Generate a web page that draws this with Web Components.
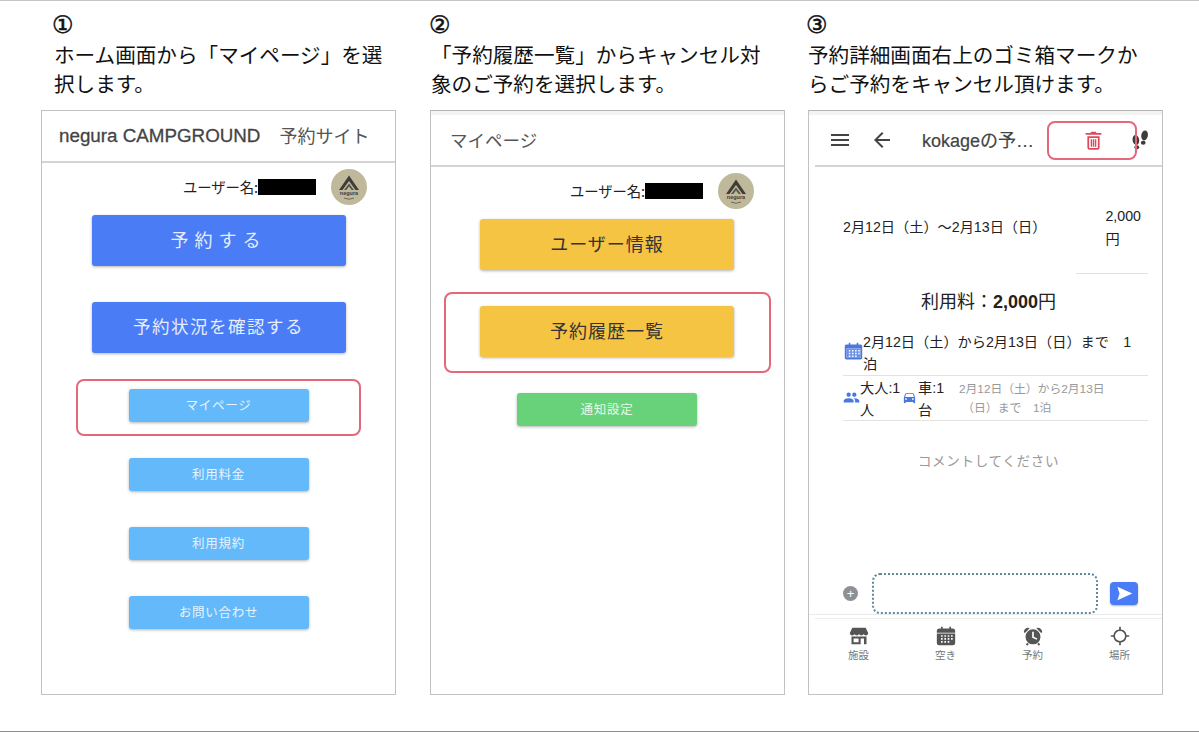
<!DOCTYPE html>
<html lang="ja">
<head>
<meta charset="utf-8">
<title>予約キャンセル手順</title>
<style>
  html, body { margin: 0; height: 100%; background: #fff; }
  body { font-family: "Liberation Sans", "Noto Sans CJK JP", sans-serif; }
</style>
</head>
<body>
<guide-page>
  <guide-step style="margin-left: 41px" inset="13">
    <span slot="num">①</span>
    ホーム画面から「マイページ」を選<br>択します。
    <phone-frame slot="phone">
      <app-bar>
        <span style="font-size: 18.8px; color: #444; margin-left: 17px; -webkit-text-stroke: .3px #444">negura CAMPGROUND</span>
        <span style="font-size: 18px; color: #555; margin-left: 19px; padding-bottom: 3px">予約サイト</span>
      </app-bar>
      <user-row pad="28"></user-row>
      <button-stack>
        <app-button kind="primary" spaced>予約する</app-button>
        <app-button kind="primary">予約状況を確認する</app-button>
        <app-button kind="light">マイページ</app-button>
        <app-button kind="light">利用料金</app-button>
        <app-button kind="light">利用規約</app-button>
        <app-button kind="light">お問い合わせ</app-button>
      </button-stack>
      <red-mark style="left: 34px; top: 268px; width: 281px; height: 53px"></red-mark>
    </phone-frame>
  </guide-step>

  <guide-step style="margin-left: 34px" inset="1">
    <span slot="num">②</span>
    「予約履歴一覧」からキャンセル対<br>象のご予約を選択します。
    <phone-frame slot="phone" strip>
      <app-bar>
        <span style="font-size: 17.5px; color: #555; margin-left: 19px; padding-bottom: 2px">マイページ</span>
      </app-bar>
      <user-row pad="30"></user-row>
      <button-stack style="padding-right: 1px">
        <app-button kind="amber">ユーザー情報</app-button>
        <app-button kind="amber">予約履歴一覧</app-button>
        <app-button kind="green">通知設定</app-button>
      </button-stack>
      <red-mark style="left: 13px; top: 181px; width: 323px; height: 77px"></red-mark>
    </phone-frame>
  </guide-step>

  <guide-step style="margin-left: 23px" inset="0">
    <span slot="num">③</span>
    予約詳細画面右上のゴミ箱マークか<br>らご予約をキャンセル頂けます。
    <phone-frame slot="phone" strip>
      <detail-bar></detail-bar>
      <booking-detail></booking-detail>
      <red-mark style="left: 238px; top: 10px; width: 86px; height: 35px"></red-mark>
    </phone-frame>
  </guide-step>
</guide-page>

<script>
const ICONS = {
  menu: '<path d="M3 18h18v-2H3v2zm0-5h18v-2H3v2zm0-7v2h18V6H3z"/>',
  back: '<path d="M20 11H7.830l5.590-5.590L12 4l-8 8 8 8 1.410-1.410L7.830 13H20v-2z"/>',
  trash: '<path d="M8.500 3.500 9.500 2h5l1 1.500H21v2H3v-2zM5 7h14v13a2.500 2.500 0 0 1-2.500 2.500h-9A2.500 2.500 0 0 1 5 20zm2 2v11a.5.5 0 0 0 .5.5h9a.5.5 0 0 0 .5-.5V9zm1.800 1.500h1.600v8.500H8.800zm2.400 0h1.600v8.500h-1.600zm2.400 0h1.600v8.500h-1.600z"/>',
  steps: '<ellipse cx="7.500" cy="12" rx="3.600" ry="5.500" transform="rotate(-8 7.500 12)"/><ellipse cx="8.500" cy="20" rx="2.600" ry="2.300"/><ellipse cx="17" cy="7" rx="3.600" ry="5.500" transform="rotate(10 17 7)"/><ellipse cx="15.500" cy="15" rx="2.600" ry="2.300"/>',
  event: '<path fill-rule="evenodd" d="M6 1h2v2h8V1h2v2h3a2 2 0 0 1 2 2v15a2 2 0 0 1-2 2H3a2 2 0 0 1-2-2V5a2 2 0 0 1 2-2h3zM3 8v12h18V8z"/><path d="M3 8h18v12H3z" opacity=".82"/><g fill="#fff"><path d="M6 10h2v2H6zm4 0h2v2h-2zm4 0h2v2h-2zm4 0h2v2h-2zM6 13.500h2v2H6zm4 0h2v2h-2zm4 0h2v2h-2zm4 0h2v2h-2zM6 17h2v2H6zm4 0h2v2h-2zm4 0h2v2h-2z"/></g>',
  people: '<path d="M16 11c1.660 0 2.990-1.340 2.990-3S17.660 5 16 5c-1.660 0-3 1.340-3 3s1.340 3 3 3zm-8 0c1.660 0 2.990-1.340 2.990-3S9.660 5 8 5C6.340 5 5 6.340 5 8s1.340 3 3 3zm0 2c-2.330 0-7 1.170-7 3.500V19h14v-2.500c0-2.330-4.670-3.500-7-3.500zm8 0c-.29 0-.62.02-.97.05 1.160.84 1.970 1.970 1.970 3.450V19h6v-2.500c0-2.330-4.670-3.500-7-3.500z"/>',
  car: '<path d="M18.920 6.010C18.720 5.420 18.160 5 17.500 5h-11c-.66 0-1.210.42-1.420 1.010L3 12v8c0 .55.45 1 1 1h1c.55 0 1-.45 1-1v-1h12v1c0 .55.45 1 1 1h1c.55 0 1-.45 1-1v-8l-2.080-5.990zM6.500 16c-.83 0-1.500-.67-1.500-1.500S5.670 13 6.500 13s1.500.67 1.500 1.500S7.330 16 6.500 16zm11 0c-.83 0-1.500-.67-1.500-1.500s.67-1.500 1.500-1.500 1.500.67 1.500 1.500-.67 1.500-1.500 1.500zM5 11l1.500-4.500h11L19 11H5z"/>',
  send: '<path d="M2 21.500 23 12 2 2.500 5 12z"/>',
  store: '<path d="M4 2h16l3 6.500c0 1.700-1.300 2.800-2.800 2.800-1.100 0-2-.5-2.700-1.300-.7.8-1.500 1.300-2.700 1.300-1.100 0-2-.5-2.800-1.300-.7.8-1.600 1.300-2.700 1.300-1.100 0-2-.5-2.600-1.300-.7.8-1.600 1.300-2.700 1.300C2.300 11.300 1 10.200 1 8.500z"/><path fill-rule="evenodd" d="M3 12.500h18V22H3zM5.500 15v4.500h6V15zm8.500 0v7h4v-7z"/>',
  calendar: '<path fill-rule="evenodd" d="M6 1h2v2h8V1h2v2h2a3 3 0 0 1 3 3v14a3 3 0 0 1-3 3H4a3 3 0 0 1-3-3V6a3 3 0 0 1 3-3h2zM1 8h22v1H1z"/><g fill="#fff"><path d="M6 11h2v2H6zm4 0h2v2h-2zm4 0h2v2h-2zm4 0h2v2h-2zM6 14.500h2v2H6zm4 0h2v2h-2zm4 0h2v2h-2zm4 0h2v2h-2zM6 18h2v2H6zm4 0h2v2h-2zm4 0h2v2h-2z"/></g>',
  alarm: '<path fill-rule="evenodd" d="M12 4a9 9 0 1 1 0 18 9 9 0 0 1 0-18zm-1 3v7l5.500 2.500.7-1.500-4.200-2V7z"/><path d="M1 7c0-3 2.500-5 5-5 1 0 1.500.3 2 .7L2.300 8.500C1.500 8.200 1 7.800 1 7zm22 0c0-3-2.500-5-5-5-1 0-1.500.3-2 .7l5.700 5.800c.8-.3 1.300-.7 1.300-1.500zM5 20l2 1.500-2 2.200-1.500-1.500zm14 0-2 1.500 2 2.200 1.500-1.500z"/>',
  gps: '<path fill-rule="evenodd" d="M11 1h2v3.100A8 8 0 0 1 19.900 11H23v2h-3.100a8 8 0 0 1-6.900 6.900V23h-2v-3.100A8 8 0 0 1 4.100 13H1v-2h3.100A8 8 0 0 1 11 4.100zm1 5a6 6 0 1 0 0 12 6 6 0 0 0 0-12z"/>'
}

customElements.define('ui-icon', class extends HTMLElement {
  constructor () {
    super()
    let shadow = this.attachShadow({mode: 'open'})
    shadow.innerHTML = `
<svg viewBox="0 0 24 24" fill="currentColor">${ICONS[this.getAttribute('name')]}</svg>
<style>
  :host { display: inline-block; flex: none; width: var(--size, 24px); height: var(--size, 24px); color: var(--tint, #555); }
  svg { display: block; width: 100%; height: 100%; }
</style>`
  }
})

customElements.define('guide-page', class extends HTMLElement {
  constructor () {
    super()
    this.attachShadow({mode: 'open'}).innerHTML = `
<slot></slot>
<style>
  :host {
    display: flex;
    box-sizing: border-box;
    height: 732px;
    overflow: hidden;
    border-top: 1px solid #c4c4c4;
    border-bottom: 1px solid #8a8a8a;
  }
</style>`
  }
})

customElements.define('guide-step', class extends HTMLElement {
  constructor () {
    super()
    let shadow = this.attachShadow({mode: 'open'})
    shadow.innerHTML = `
<div class="cap">
  <div class="num"><slot name="num"></slot></div>
  <slot></slot>
</div>
<slot name="phone"></slot>
<style>
  :host { display: flex; flex-direction: column; width: 355px; flex: none; }
  .cap {
    box-sizing: border-box;
    height: 109px;
    padding: 13px 0 0 ${this.getAttribute('inset') || 0}px;
    font: 20.6px/29px "Noto Sans CJK JP", sans-serif;
    color: #111;
    white-space: nowrap;
  }
  .num {
    margin-left: -2px;
    height: 26px;
    font: 24px/23px "DejaVu Sans", sans-serif;
    -webkit-text-stroke: .5px #111;
  }
</style>`
  }
})

customElements.define('phone-frame', class extends HTMLElement {
  constructor () {
    super()
    this.attachShadow({mode: 'open'}).innerHTML = `
<slot></slot>
<style>
  :host {
    display: flex;
    flex-direction: column;
    position: relative;
    box-sizing: border-box;
    height: 585px;
    border: 1px solid #c2c2c2;
    background: #fff;
  }
  :host([strip]) { padding-top: 4px; border-top-color: #b4b4b4; }
</style>`
    if (this.hasAttribute('strip')) this.style.backgroundImage = 'linear-gradient(#f3f3f3 4px, #fff 4px)'
  }
})

customElements.define('app-bar', class extends HTMLElement {
  constructor () {
    super()
    this.attachShadow({mode: 'open'}).innerHTML = `
<slot></slot>
<style>
  :host {
    display: flex;
    align-items: center;
    flex: none;
    height: 50px;
    background: #fff;
    font-family: "Liberation Sans", "Noto Sans CJK JP", sans-serif;
    border-bottom: 2px solid #d4d4d4;
    white-space: nowrap;
  }
</style>`
  }
})

customElements.define('detail-bar', class extends HTMLElement {
  constructor () {
    super()
    this.attachShadow({mode: 'open'}).innerHTML = `
<ui-icon name="menu" style="--size: 24px; --tint: #444; margin-left: 13px"></ui-icon>
<ui-icon name="back" style="--size: 24px; --tint: #444; margin-left: 18px"></ui-icon>
<span class="title">kokageの予…</span>
<ui-icon name="trash" style="--size: 21px; --tint: #dd4a5c; margin-left: 47px"></ui-icon>
<ui-icon name="steps" style="--size: 22px; --tint: #3c3c3c; margin-left: 25px"></ui-icon>
<style>
  :host {
    display: flex;
    align-items: center;
    flex: none;
    height: 50px;
    margin-left: 6px;
    border-bottom: 2px solid #d4d4d4;
    white-space: nowrap;
  }
  .title {
    margin-left: 28px;
    padding-bottom: 2px;
    font: 18px "Liberation Sans", "Noto Sans CJK JP", sans-serif;
    color: #444;
    width: 114px;
    -webkit-text-stroke: .2px #444;
  }
</style>`
  }
})

customElements.define('user-row', class extends HTMLElement {
  constructor () {
    super()
    this.attachShadow({mode: 'open'}).innerHTML = `
<span class="name">ユーザー名:</span><span class="hidden"></span>
<svg class="logo" viewBox="0 0 36 36">
  <circle cx="18" cy="18" r="18" fill="#bfb89b"/>
  <path d="M18 6.500 28 21h-3.500L18 12 11.500 21H8z" fill="#3f3d38"/>
  <path d="M18 14.500 23 21h-2.400L18 17.500 15.400 21H13z" fill="#59564c"/>
  <text x="18" y="26" text-anchor="middle" font-size="5.500" font-family="Liberation Sans, sans-serif" font-weight="700" fill="#3f3d38">negura</text>
  <path d="M13 29q5 2.500 10 0" stroke="#57544a" stroke-width=".8" fill="none"/>
</svg>
<style>
  :host {
    display: flex;
    align-items: center;
    justify-content: flex-end;
    flex: none;
    padding: 6px ${this.getAttribute('pad')}px 0 0;
    font: 14.400px "Noto Sans CJK JP", sans-serif;
    color: #222;
  }
  .name { white-space: nowrap; letter-spacing: -.1px; padding-bottom: 2px; }
  .hidden { width: 58px; height: 16px; background: #000; margin-right: 15px; }
  .logo { width: 36px; height: 36px; flex: none; }
</style>`
  }
})

customElements.define('button-stack', class extends HTMLElement {
  constructor () {
    super()
    this.attachShadow({mode: 'open'}).innerHTML = `
<slot></slot>
<style>
  :host { display: flex; flex-direction: column; align-items: center; gap: 36px; padding-top: 10px; }
</style>`
  }
})

customElements.define('app-button', class extends HTMLElement {
  constructor () {
    super()
    this.attachShadow({mode: 'open'}).innerHTML = `
<slot></slot>
<style>
  :host {
    display: flex;
    align-items: center;
    justify-content: center;
    box-sizing: border-box;
    border-radius: 3px;
    white-space: nowrap;
    font-family: "Noto Sans CJK JP", sans-serif;
    box-shadow: 0 1px 3px rgba(0,0,0,.3);
  }
  :host([kind=primary]) { width: 254px; height: 51px; padding-bottom: 4px; background: #4a7cf6; color: #e6edfd; font-size: 17.500px; letter-spacing: 1.500px; }
  :host([kind=primary][spaced]) { font-size: 18px; letter-spacing: 6px; }
  :host([kind=amber]) { width: 254px; height: 51px; padding-bottom: 4px; background: #f5c442; color: #333; font-size: 18px; letter-spacing: 1px; }
  :host([kind=light]) { width: 180px; height: 33px; padding-bottom: 3px; background: #64b9fa; color: #e8f4fe; font-size: 12.500px; letter-spacing: .7px; }
  :host([kind=green]) { width: 180px; height: 33px; padding-bottom: 2px; background: #68d27a; color: #e6f7e9; font-size: 12.500px; letter-spacing: .7px; }
</style>`
  }
})

customElements.define('red-mark', class extends HTMLElement {
  constructor () {
    super()
    this.attachShadow({mode: 'open'}).innerHTML = `
<style>
  :host {
    display: block;
    position: absolute;
    border: 2px solid #e4687a;
    border-radius: 8px;
    pointer-events: none;
  }
</style>`
  }
})

customElements.define('booking-detail', class extends HTMLElement {
  constructor () {
    super()
    this.attachShadow({mode: 'open'}).innerHTML = `
<div class="head">
  <span>2月12日（土）〜2月13日（日）</span>
  <span class="price">2,000<br>円</span>
</div>
<div class="short"></div>
<div class="fee">利用料：<b>2,000</b>円</div>
<div class="row one">
  <ui-icon name="event" style="--size: 19px; --tint: #4a78e0; margin-top: 11px"></ui-icon>
  <span>2月12日（土）から2月13日（日）まで　1<br>泊</span>
</div>
<div class="row two">
  <ui-icon name="people" style="--size: 17px; --tint: #4a78e0; margin-top: 12px"></ui-icon>
  <span class="adult">大人:1<br>人</span>
  <ui-icon name="car" style="--size: 15px; --tint: #4a78e0; margin-top: 13px"></ui-icon>
  <span class="cars">車:1<br>台</span>
  <span class="note">2月12日（土）から2月13日<br>&nbsp;（日）まで　1泊</span>
</div>
<div class="hint">コメントしてください</div>
<div class="grow"></div>
<div class="input">
  <span class="plus">+</span>
  <span class="box"></span>
  <span class="send"><ui-icon name="send" style="--size: 17px; --tint: #fff"></ui-icon></span>
</div>
<nav>
  <span><ui-icon name="store"></ui-icon>施設</span>
  <span><ui-icon name="calendar"></ui-icon>空き</span>
  <span><ui-icon name="alarm"></ui-icon>予約</span>
  <span><ui-icon name="gps"></ui-icon>場所</span>
</nav>
<style>
  :host {
    display: flex;
    flex-direction: column;
    flex: 1;
    min-height: 0;
    font: 14.200px/23px "Liberation Sans", "Noto Sans CJK JP", sans-serif;
    color: #222;
  }
  .head { display: flex; align-items: center; padding: 38px 0 0 34px; height: 46px; white-space: nowrap; }
  .head > span:first-child { padding-bottom: 2px; }
  .price { margin-left: 59px; }
  .short { height: 1px; background: #e2e2e2; width: 72px; margin: 22px 14px 0 auto; }
  .fee { margin-top: 17px; text-align: center; font-size: 18px; line-height: 23px; color: #222; padding-left: 6px; }
  .row {
    display: flex;
    align-items: flex-start;
    margin: 0 14px 0 34px;
    border-bottom: 1px solid #e2e2e2;
    line-height: 22px;
    white-space: nowrap;
  }
  .one { margin-top: 17px; height: 44px; padding-left: 1px; }
  .two { margin-top: 0; height: 45px; padding-top: 1px; box-sizing: border-box; }
  .adult { width: 42px; }
  .cars { width: 41px; margin-left: 1px; }
  .note { font-size: 11.800px; line-height: 19px; color: #999; padding-top: 3px; }
  .hint { margin-top: 29px; text-align: center; font-size: 13.500px; color: #999; padding-left: 6px; letter-spacing: .7px; }
  .grow { flex: 1; }
  .input {
    display: flex;
    align-items: center;
    flex: none;
    height: 42px;
    padding-left: 34px;
    border-bottom: 1px solid #ebebeb;
  }
  .plus {
    width: 15px; height: 15px; border-radius: 50%;
    background: #8f8f96; color: #fff;
    font: 13px/15px "Liberation Sans", sans-serif;
    text-align: center;
  }
  .box {
    box-sizing: border-box;
    width: 226px; height: 41px;
    margin-left: 14px;
    border: 2px dotted #5b8b9b;
    border-radius: 8px;
  }
  .send {
    display: flex; align-items: center; justify-content: center;
    width: 28px; height: 23px;
    margin-left: 12px;
    border-radius: 4px;
    background: #4a7cf6;
    box-shadow: 0 1px 2px rgba(0,0,0,.3);
  }
  nav {
    display: grid;
    grid-template-columns: repeat(4, 87px);
    flex: none;
    height: 76px;
    margin: 3px 0 0 6px;
    border-top: 1px solid #ececec;
    box-sizing: border-box;
  }
  nav span {
    display: flex;
    flex-direction: column;
    align-items: center;
    padding-top: 7px;
    font: 10.500px/16px "Noto Sans CJK JP", sans-serif;
    color: #777;
    --size: 20px;
    --tint: #555;
    gap: 1px;
  }
</style>`
  }
})
</script>
</body>
</html>
